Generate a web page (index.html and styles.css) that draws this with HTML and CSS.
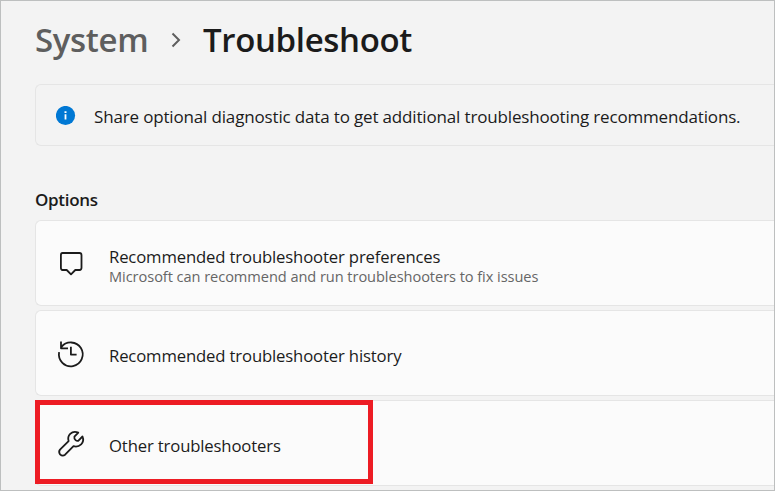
FILE: index.html
```html
<!DOCTYPE html>
<html lang="en">
<head>
<meta charset="UTF-8">
<meta name="viewport" content="width=device-width, initial-scale=1.0">
<title>Troubleshoot</title>
<link rel="stylesheet" href="styles.css">
</head>
<body>

<main class="window">
    <h1 class="breadcrumb">
        <span class="parent">System</span>
        <svg class="chevron" width="10" height="16" viewBox="0 0 10 16"><path d="M1.5 1.5 8 8 1.5 14.5"/></svg>
        <span class="current">Troubleshoot</span>
    </h1>

    <div class="info">
        <svg class="info-icon" width="20" height="20" viewBox="0 0 20 20">
            <circle cx="9.5" cy="9.5" r="9.6"/>
            <path d="M8.5 5.2h2v1.8H8.5zM8.6 8.3h1.8v5.2H8.6z"/>
        </svg>
        <span class="info-text">Share optional diagnostic data to get additional troubleshooting recommendations.</span>
    </div>

    <h2>Options</h2>

    <div class="cards">
        <div class="card">
            <svg class="icon" width="30" height="30" viewBox="0 0 30 30">
                <path d="M6.5 4H23.5Q25.5 4 25.5 6.2V18.8Q25.5 21 23.5 21H19.3L15 25.4L10.7 21H6.5Q4.9 21 4.9 18.8V6.2Q4.9 4 6.5 4Z"/>
            </svg>
            <div class="label">
                <p class="name">Recommended troubleshooter preferences</p>
                <p class="desc">Microsoft can recommend and run troubleshooters to fix issues</p>
            </div>
        </div>
        <div class="card">
            <svg class="icon" width="30" height="30" viewBox="0 0 30 30">
                <path d="M3.1 13.2A11.9 11.9 0 1 0 5.3 8.2M5 2.5V9.3H12M14.9 7.8V15.6H20.6"/>
            </svg>
            <p class="name">Recommended troubleshooter history</p>
        </div>
        <div class="card">
            <svg class="icon" width="30" height="30" viewBox="0 0 30 30">
                <path d="M22.3 3.6Q17.5 1.6 14.2 4.9Q11.3 7.8 12.6 12.1L4 20.7Q2.3 22.7 4 25.3Q6.6 27.7 9.1 25.7L17.5 17.2Q22 18.4 25.1 15.4Q28.4 12 26.5 7.5L22.2 11.8Q20.8 12.2 19.6 11.1Q18 9.7 18.4 7.7Z"/>
            </svg>
            <p class="name">Other troubleshooters</p>
            <div class="highlight"></div>
        </div>
    </div>
</main>

</body>
</html>
```
FILE: styles.css
```css
body {
    margin: 0;
    font-family: "Open Sans", "Noto Sans", sans-serif;
    color: #1b1b1b;
    background-color: #f3f3f3;
}
.window {
    box-sizing: border-box;
    width: 775px;
    height: 491px;
    padding: 15px 0 0 34px;
    border: 1px solid #bdbfbf;
    overflow: hidden;
}
h1, h2, p {
    margin: 0;
}
svg {
    display: block;
    flex: none;
}
.breadcrumb {
    display: flex;
    align-items: center;
    height: 48px;
    font-size: 33px;
    font-weight: 600;
    line-height: 48px;
    letter-spacing: -0.35px;
    white-space: nowrap;
}
.parent {
    width: 136px;
    color: #5e5e5e;
}
.chevron {
    width: 10px;
    margin-right: 22px;
    fill: none;
    stroke: #5e5e5e;
    stroke-width: 2;
}
.info {
    box-sizing: border-box;
    display: flex;
    align-items: center;
    height: 62px;
    margin-top: 20px;
    padding-top: 2px;
    padding-left: 20px;
    border: 1px solid #e5e5e5;
    border-right: none;
    border-radius: 6px 0 0 6px;
}
.info-icon circle {
    fill: #0078d4;
}
.info-icon path {
    fill: #fff;
}
.info-text {
    margin-left: 18px;
    font-size: 17px;
    letter-spacing: -0.16px;
    white-space: nowrap;
}
h2 {
    height: 28px;
    margin-top: 40px;
    margin-bottom: 6px;
    font-size: 17px;
    font-weight: 600;
    line-height: 28px;
    letter-spacing: -0.3px;
}
.cards {
    display: flex;
    flex-direction: column;
    gap: 4px;
}
.card {
    position: relative;
    box-sizing: border-box;
    display: flex;
    align-items: center;
    height: 86px;
    padding-top: 2px;
    padding-left: 20px;
    background-color: #fbfbfb;
    border: 1px solid #e5e5e5;
    border-right: none;
    border-radius: 6px 0 0 6px;
}
.icon {
    margin-right: 23px;
    fill: none;
    stroke: #1b1b1b;
    stroke-width: 1.8;
    stroke-linejoin: round;
}
.name {
    padding-top: 3px;
    font-size: 16.7px;
    line-height: 22px;
    letter-spacing: -0.15px;
    white-space: nowrap;
}
.desc {
    font-size: 14.6px;
    line-height: 17px;
    letter-spacing: -0.06px;
    color: #666;
    white-space: nowrap;
}
.highlight {
    position: absolute;
    top: -1px;
    left: -1px;
    box-sizing: border-box;
    width: 338px;
    height: 84px;
    border: 5px solid #ed1c24;
}
```
